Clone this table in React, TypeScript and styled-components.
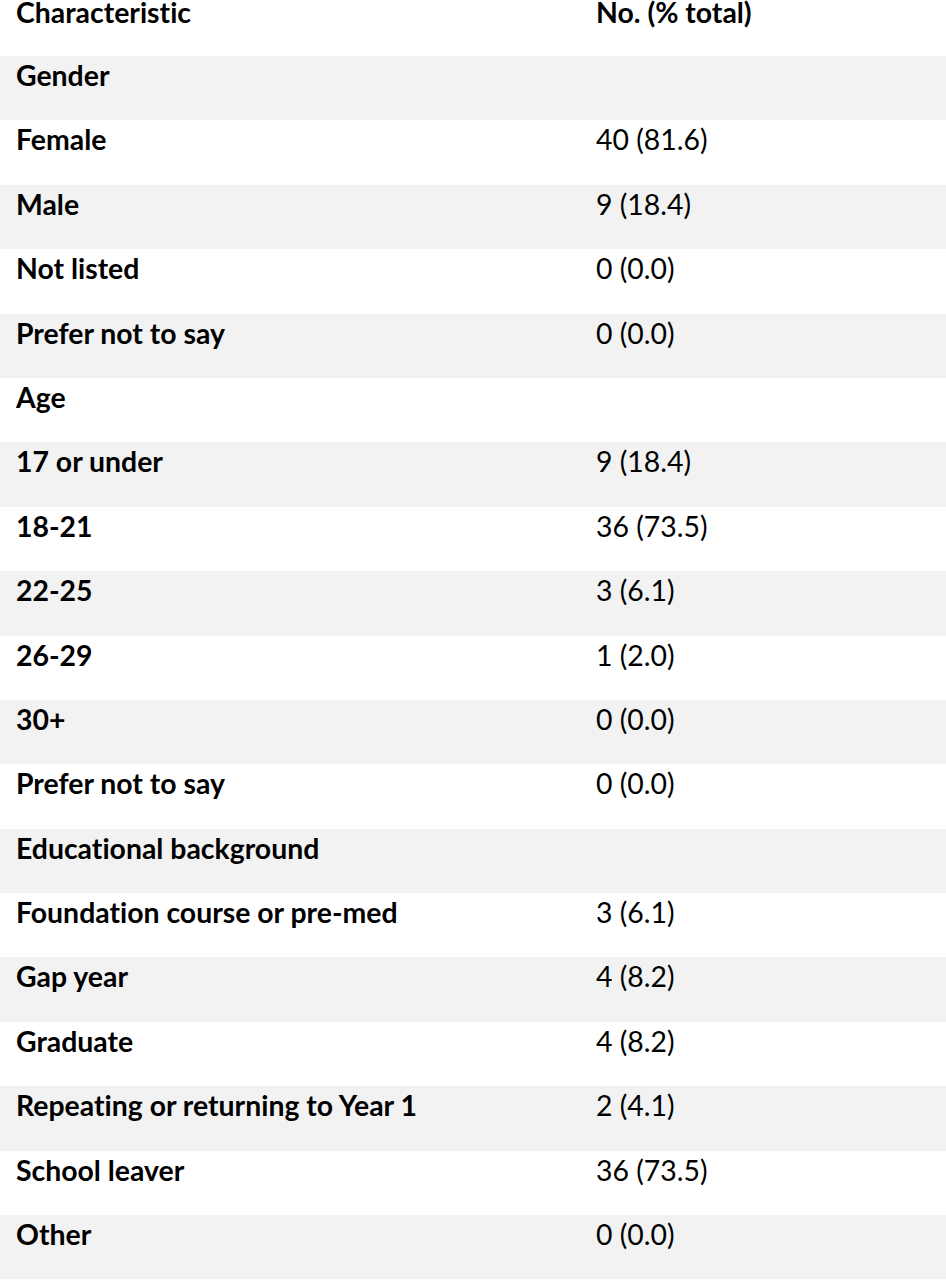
import React from "react";
import styled, { createGlobalStyle } from "styled-components";

const Global = createGlobalStyle`
  html, body { margin: 0; padding: 0; background: #fff; }
  body { font-family: Lato, "Open Sans", sans-serif; color: #000; }
`;

const Table = styled.div`
  display: flex;
  flex-direction: column;
  width: 946px;
`;

const Row = styled.div<{ $shade?: boolean; $head?: boolean }>`
  display: grid;
  grid-template-columns: 580px 1fr;
  align-items: start;
  height: ${(p) => (p.$head ? "56px" : "64.4px")};
  background: ${(p) => (p.$shade ? "#f2f2f2" : "#ffffff")};
  box-sizing: border-box;
  padding-top: ${(p) => (p.$head ? "0px" : "3px")};
`;

const Cell = styled.div<{ $bold?: boolean; $head?: boolean }>`
  padding-left: 16px;
  font-size: 28.4px;
  line-height: ${(p) => (p.$head ? "25px" : "32px")};
  font-weight: ${(p) => (p.$bold ? 700 : 400)};
  font-variant-ligatures: none;
  white-space: nowrap;
`;

const rows: [string, string][] = [
  ["Gender", ""],
  ["Female", "40 (81.6)"],
  ["Male", "9 (18.4)"],
  ["Not listed", "0 (0.0)"],
  ["Prefer not to say", "0 (0.0)"],
  ["Age", ""],
  ["17 or under", "9 (18.4)"],
  ["18-21", "36 (73.5)"],
  ["22-25", "3 (6.1)"],
  ["26-29", "1 (2.0)"],
  ["30+", "0 (0.0)"],
  ["Prefer not to say", "0 (0.0)"],
  ["Educational background", ""],
  ["Foundation course or pre-med", "3 (6.1)"],
  ["Gap year", "4 (8.2)"],
  ["Graduate", "4 (8.2)"],
  ["Repeating or returning to Year 1", "2 (4.1)"],
  ["School leaver", "36 (73.5)"],
  ["Other", "0 (0.0)"],
];

export default function App() {
  return (
    <>
      <Global />
      <Table>
        <Row $head>
          <Cell $bold $head>Characteristic</Cell>
          <Cell $bold $head>No. (% total)</Cell>
        </Row>
        {rows.map(([k, v], i) => (
          <Row key={i} $shade={i % 2 === 0}>
            <Cell $bold>{k}</Cell>
            <Cell>{v}</Cell>
          </Row>
        ))}
      </Table>
    </>
  );
}
